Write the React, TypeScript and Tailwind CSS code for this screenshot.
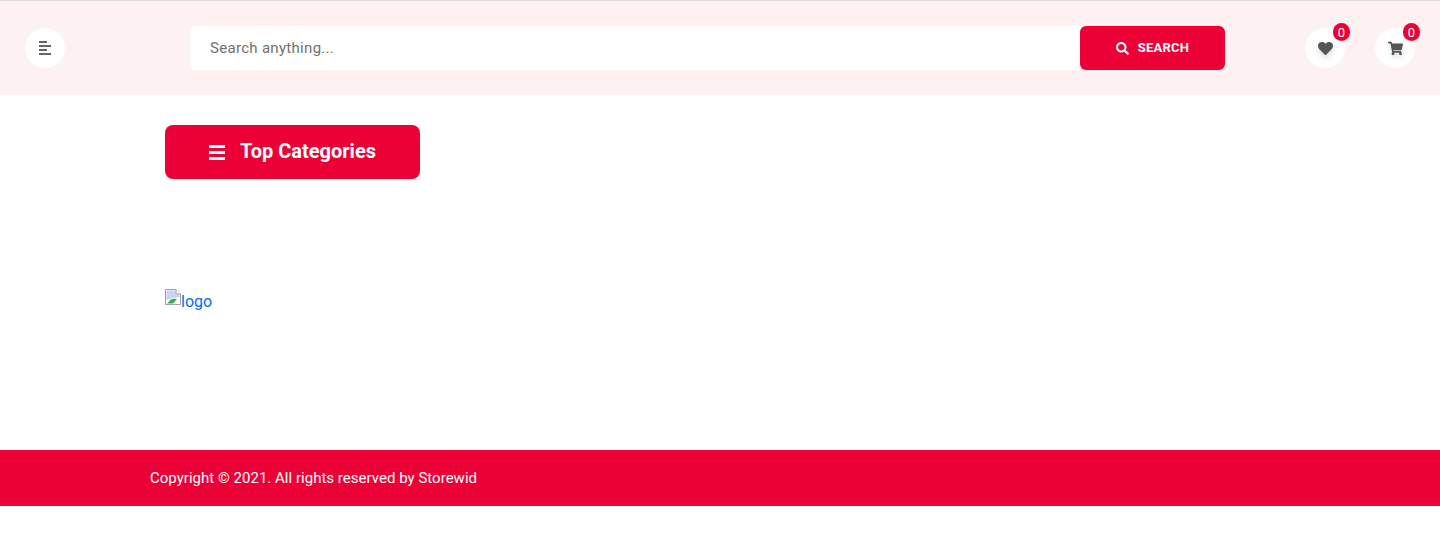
import { FaHeart, FaSearch, FaShoppingCart } from "react-icons/fa";

function BrokenImage() {
  return (
    <svg width="16" height="16" viewBox="0 0 16 16" className="shrink-0">
      <path d="M0.5 0.5H11L15.5 5V15.5H0.5Z" fill="#fff" stroke="#9aa0a6" />
      <path d="M1.5 1.5H10.5V5.5H14.5V8L8 9L1.5 11Z" fill="#c5d5f3" />
      <path d="M2 14.5L6 10.5C8 9.5 10 9.5 12 10L8 14.5Z" fill="#3fa648" />
      <path d="M11 0.5V5H15.5" fill="#fff" stroke="#9aa0a6" />
      <path d="M9 15L15 9" stroke="#fff" strokeWidth="1.5" />
    </svg>
  );
}

function IconBadge({ children }: { children: React.ReactNode }) {
  return (
    <div className="relative flex h-10 w-10 items-center justify-center rounded-full bg-white text-[#555555]">
      {children}
      <span className="absolute -right-[5px] -top-[5px] flex h-[18px] w-[17px] items-center justify-center rounded-full bg-[#eb0135] text-[13px] leading-none text-white">
        0
      </span>
    </div>
  );
}

export default function App() {
  return (
    <div className="min-h-[539px] bg-white font-['Roboto',sans-serif]">
      <header className="flex h-[95px] items-center border-t border-[#dddddd] bg-[#fef1f1] pl-[25px] pr-[25px]">
        <button type="button" className="flex h-10 w-10 flex-col items-start justify-center gap-[2px] rounded-full bg-white pl-[14px]">
          <span className="h-[2px] w-[8px] bg-[#666666]" />
          <span className="h-[2px] w-[12px] bg-[#666666]" />
          <span className="h-[2px] w-[8px] bg-[#666666]" />
          <span className="h-[2px] w-[12px] bg-[#666666]" />
        </button>

        <div className="ml-[125px] flex h-11 w-[1035px] rounded-md bg-white">
          <div className="flex-1 pl-5 text-[15px] leading-11 tracking-[0.3px] text-[#717171]">Search anything...</div>
          <button type="button" className="flex w-[145px] items-center justify-center gap-[9px] rounded-md bg-[#eb0135] text-[13px] font-bold tracking-[0.2px] text-white">
            <FaSearch className="h-[13px] w-[13px]" />
            SEARCH
          </button>
        </div>

        <div className="ml-auto flex gap-[30px]">
          <IconBadge>
            <FaHeart className="h-[15px] w-[15px] drop-shadow-[0_3px_3px_rgba(0,0,0,0.15)]" />
          </IconBadge>
          <IconBadge>
            <FaShoppingCart className="h-[15px] w-[15px] drop-shadow-[0_3px_3px_rgba(0,0,0,0.15)]" />
          </IconBadge>
        </div>
      </header>

      <main className="h-[355px] pl-[165px] pt-[30px]">
        <button type="button" className="flex h-[54px] w-[255px] items-center justify-center gap-[15px] rounded-lg bg-[#eb0135] pb-[2px] text-xl font-bold text-white">
          <span className="mt-[2px] flex w-4 flex-col gap-[3px]">
            <span className="h-[3px] w-4 bg-white" />
            <span className="h-[3px] w-4 bg-white" />
            <span className="h-[3px] w-4 bg-white" />
          </span>
          Top Categories
        </button>
        <a href="#" className="mt-[110px] flex items-start text-base leading-6 text-[#006cf5]">
          <BrokenImage />
          <span className="pt-px">logo</span>
        </a>
      </main>

      <footer className="flex h-14 items-center bg-[#eb0135] pl-[150px] text-[15px] tracking-[0.02px] text-white">
        Copyright © 2021. All rights reserved by Storewid
      </footer>
    </div>
  );
}
